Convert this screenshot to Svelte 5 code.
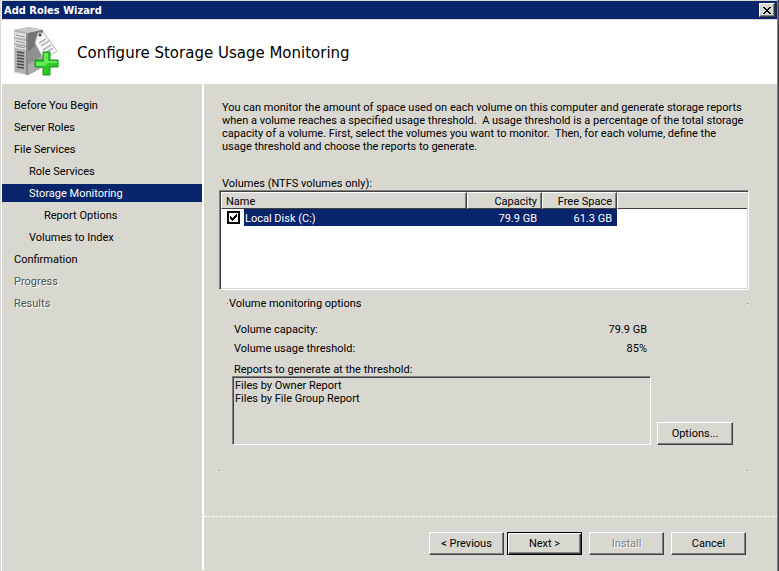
<script lang="ts">
  type Step = { label: string; level: number; disabled?: boolean };

  const steps: Step[] = [
    { label: 'Before You Begin', level: 0 },
    { label: 'Server Roles', level: 0 },
    { label: 'File Services', level: 0 },
    { label: 'Role Services', level: 1 },
    { label: 'Storage Monitoring', level: 1 },
    { label: 'Report Options', level: 2 },
    { label: 'Volumes to Index', level: 1 },
    { label: 'Confirmation', level: 0 },
    { label: 'Progress', level: 0, disabled: true },
    { label: 'Results', level: 0, disabled: true }
  ];

  let current = $state('Storage Monitoring');
  let volumes = $state([
    { name: 'Local Disk (C:)', capacity: '79.9 GB', free: '61.3 GB', threshold: '85%', checked: true }
  ]);
  let selected = $state(0);
  let volume = $derived(volumes[selected]);

  const reports = ['Files by Owner Report', 'Files by File Group Report'];
</script>

<div class="window">
  <div class="titlebar">
    <span>Add Roles Wizard</span>
    <button class="close" aria-label="Close">
      <svg width="8" height="7" viewBox="0 0 8 7" shape-rendering="crispEdges">
        <path d="M0 0h2v1h1v1h2V1h1V0h2v1H7v1H6v1H5v1h1v1h1v1h1v1H6V6H5V5H3v1H2v1H0V6h1V5h1V4h1V3H2V2H1V1H0z" />
      </svg>
    </button>
  </div>

  <header>
    <svg class="logo" width="46" height="50" viewBox="0 0 46 50">
      <path d="M0 3 15 0l14 3v37l-15 8-14-3z" fill="#8c8c8c" />
      <path d="M0 3 15 0l14 3-14 4z" fill="#c9c9c9" />
      <path d="M0 3l14 3v42L0 45z" fill="#b0b0b0" />
      <path d="M14 6l15-3v37l-15 8z" fill="#8f8f8f" />
      <path d="M14 6l15-3v9L14 25z" fill="#747474" />
      <path d="M14 38l15-10v12l-15 8z" fill="#a9a9a9" />
      <path d="M1 5l11 2v5L1 10zM1 12l11 2v4L1 16zM1 18l11 2v3L1 21z" fill="#e4e4e4" />
      <path d="M2 8l9 2M2 14l9 2M2 19l9 2" stroke="#8e8e8e" fill="none" />
      <path d="M3 25l7 1M3 28l7 1M3 31l7 1M3 34l7 1M3 37l7 1M3 40l7 1" stroke="#4d4d4d" stroke-width="1.5" fill="none" />
      <path d="M0 3v42l14 3" stroke="#dedede" fill="none" />
      <path d="M13 7v41" stroke="#666" fill="none" />
      <path d="M24 6l6 0 13 18-13 9-9-17z" fill="#f7f7f7" stroke="#b4b4b4" />
      <path d="M25 16l7-4M27 19l8-5M29 23l8-5M31 26l8-5" stroke="#b0b6ba" stroke-width="1.5" fill="none" />
      <circle cx="26" cy="8" r="1.5" fill="#444" />
      <path d="M29 25h7v8h8v7h-8v8h-7v-8h-8v-7h8z" fill="#2cc82a" stroke="#159419" />
      <path d="M30 26h4v8h9v2h-9l-3 3h-9v-4h8z" fill="#62ec52" />
    </svg>
    <h1>Configure Storage Usage Monitoring</h1>
  </header>

  <div class="body">
    <nav aria-label="Wizard steps">
      <ul>
        {#each steps as step}
          <li>
            <button
              class="step level{step.level}"
              class:current={step.label === current}
              disabled={step.disabled}
              onclick={() => (current = step.label)}
            >
              {step.label}
            </button>
          </li>
        {/each}
      </ul>
    </nav>

    <main>
      <div class="content">
        <p class="intro">
          You can monitor the amount of space used on each volume on this computer and generate storage reports<br />
          when a volume reaches a specified usage threshold.&nbsp; A usage threshold is a percentage of the total storage<br />
          capacity of a volume. First, select the volumes you want to monitor.&nbsp; Then, for each volume, define the<br />
          usage threshold and choose the reports to generate.
        </p>

        <div class="caption" id="volumes-label">Volumes (NTFS volumes only):</div>
        <div class="list">
          <table aria-labelledby="volumes-label">
            <colgroup>
              <col class="c-check" />
              <col class="c-name" />
              <col class="c-size" />
              <col class="c-size" />
              <col />
            </colgroup>
            <thead>
              <tr>
                <th colspan="2">Name</th>
                <th class="num">Capacity</th>
                <th class="num">Free Space</th>
                <th class="rest"></th>
              </tr>
            </thead>
            <tbody>
              {#each volumes as v, i}
                <tr class:selected={i === selected} onclick={() => (selected = i)}>
                  <td class="check"><input type="checkbox" aria-label={v.name} bind:checked={v.checked} /></td>
                  <td class="cell name">{v.name}</td>
                  <td class="cell num">{v.capacity}</td>
                  <td class="cell num">{v.free}</td>
                  <td></td>
                </tr>
              {/each}
            </tbody>
          </table>
        </div>

        <section class="group">
          <div class="group-head">
            <i class="dot"></i>
            <h2>Volume monitoring options</h2>
            <i class="dot end"></i>
          </div>
          <div class="group-body">
            <dl>
              <div><dt>Volume capacity:</dt><dd>{volume.capacity}</dd></div>
              <div><dt>Volume usage threshold:</dt><dd>{volume.threshold}</dd></div>
            </dl>
            <label for="reports">Reports to generate at the threshold:</label>
            <div class="reports">
              <textarea id="reports" readonly value={reports.join('\n')}></textarea>
              <button class="btn">Options...</button>
            </div>
          </div>
          <div class="group-foot">
            <i class="dot"></i>
            <i class="dot end"></i>
          </div>
        </section>
      </div>

      <footer>
        <div class="pair">
          <button class="btn">&lt; Previous</button>
          <button class="btn default">Next &gt;</button>
        </div>
        <button class="btn" disabled>Install</button>
        <button class="btn">Cancel</button>
      </footer>
    </main>
  </div>
</div>

<style>
  :global(body) {
    background: #d8d8d0;
  }
  .window {
    box-sizing: border-box;
    min-height: 100vh;
    display: flex;
    flex-direction: column;
    padding: 1px 1px 1px 2px;
    background: #d8d8d0;
    box-shadow: inset -1px 0 #404040, inset -2px 0 #808080, inset 1px 0 #d8d8d0, inset 2px 0 #fff;
    font: 11px/13px Roboto, 'DejaVu Sans Condensed', sans-serif;
    color: #000;
  }
  button, textarea {
    font: inherit;
    color: inherit;
    margin: 0;
    border-radius: 0;
  }
  h1, h2, p, ul, dl, dd { margin: 0; padding: 0; }

  .titlebar {
    display: flex;
    align-items: center;
    justify-content: space-between;
    height: 18px;
    padding: 0 2px;
    margin-right: 1px;
    background: #08246b;
    color: #fff;
    font-family: 'DejaVu Sans Condensed', 'DejaVu Sans', sans-serif;
    font-weight: bold;
  }
  .close {
    display: flex;
    align-items: center;
    justify-content: center;
    width: 16px;
    height: 14px;
    padding: 0;
    border: 1px solid;
    border-color: #fff #404040 #404040 #fff;
    box-shadow: inset -1px -1px #808080;
    background: #d8d8d0;
  }

  header {
    display: flex;
    align-items: center;
    gap: 17px;
    height: 64px;
    margin: 1px 1px 0 0;
    padding-left: 12px;
    background: #fff;
  }
  h1 {
    font: 15px/20px 'DejaVu Sans', sans-serif;
    padding-top: 2px;
  }

  .body { flex: 1; display: flex; margin-right: 1px; }
  nav {
    flex: none;
    width: 200px;
    border-right: 2px solid #fff;
    padding-top: 12px;
  }
  ul { list-style: none; }
  li { height: 22px; }
  .step {
    display: block;
    box-sizing: border-box;
    width: 100%;
    height: 18px;
    padding: 0 0 0 12px;
    border: 0;
    background: none;
    text-align: left;
  }
  .level1 { padding-left: 27px; }
  .level2 { padding-left: 42px; }
  .step.current { background: #08246b; color: #fff; }
  .step:disabled { color: #505050; text-shadow: 1px 1px #fff; }

  main { flex: 1; min-width: 0; display: flex; flex-direction: column; }
  .content { flex: 1; padding: 17px 28px 24px 15px; }
  .intro { padding-left: 3px; white-space: nowrap; }
  .caption { margin-top: 24px; padding-left: 3px; }

  .list {
    height: 96px;
    border: 1px solid;
    border-color: #808080 #fff #fff #808080;
    box-shadow: inset 1px 1px #404040, inset -1px -1px #d8d8d0;
    padding: 1px;
    background: #fff;
  }
  table { width: 100%; table-layout: fixed; border-collapse: separate; border-spacing: 0; }
  .c-check { width: 23px; }
  .c-name { width: 223px; }
  .c-size { width: 75px; }
  th {
    height: 17px;
    box-sizing: border-box;
    padding: 1px 4px 0;
    background: #d8d8d0;
    border: 1px solid;
    border-color: #fff #404040 #404040 #fff;
    box-shadow: inset -1px 0 #808080;
    font-weight: normal;
    text-align: left;
  }
  th.num, td.num { text-align: right; }
  th.rest { border-right: 0; box-shadow: none; }
  td { height: 17px; padding: 0; }
  .cell { height: 16px; padding: 1px 5px 0 1px; }
  .selected .cell { background: #08246b; color: #fff; }
  .check { padding-left: 6px; }
  input {
    appearance: none;
    display: block;
    box-sizing: border-box;
    width: 13px;
    height: 13px;
    margin: 0;
    border: 2px solid #000;
    background: #fff;
  }
  input:checked {
    background: #fff url("data:image/svg+xml,%3Csvg xmlns='http://www.w3.org/2000/svg' viewBox='0 0 9 9' shape-rendering='crispEdges'%3E%3Cpath d='M1 3h1v1h1v1h1V4h1V3h1V2h1V1h1v3H7v1H6v1H5v1H4v1H3V7H2V6H1z'/%3E%3C/svg%3E") center / 9px 9px;
  }

  .group-head, .group-foot { display: flex; align-items: center; }
  .group-head { margin-top: 7px; padding-left: 8px; }
  .group-foot { margin-top: 25px; }
  h2 { font-size: 11px; line-height: 13px; font-weight: normal; padding-left: 1px; }
  .dot { width: 1px; height: 1px; background: #808080; box-shadow: 1px 1px #fff; }
  .end { margin-left: auto; margin-right: 1px; }
  .group-body { padding: 13px 16px 0 13px; }
  dl { margin-right: 86px; padding-left: 2px; }
  dl div { display: flex; justify-content: space-between; margin-bottom: 6px; }
  label { display: block; margin-top: 8px; padding-left: 2px; }
  .reports { display: flex; align-items: flex-end; gap: 6px; }
  textarea {
    flex: 1;
    min-width: 0;
    box-sizing: border-box;
    height: 69px;
    padding: 2px;
    border: 1px solid;
    border-color: #808080 #fff #fff #808080;
    box-shadow: inset 1px 1px #404040;
    outline: 0;
    background: #d8d8d0;
    resize: none;
  }

  .btn {
    box-sizing: border-box;
    width: 75px;
    height: 23px;
    padding: 0;
    border: 1px solid;
    border-color: #fff #404040 #404040 #fff;
    box-shadow: inset -1px -1px #808080;
    background: #d8d8d0;
  }
  .reports .btn { width: 76px; }
  .btn.default {
    border-color: #000;
    box-shadow: inset 1px 1px #fff, inset -1px -1px #404040, inset -2px -2px #808080;
  }
  .btn:disabled { color: #808080; text-shadow: 1px 1px #fff; }

  footer {
    display: flex;
    justify-content: flex-end;
    gap: 7px;
    padding: 16px 31px 15px 0;
    background: repeating-linear-gradient(90deg, #fff 0 3px, #d8d8d0 3px 4px) top / 100% 1px no-repeat;
  }
  .pair { display: flex; gap: 3px; }
</style>
